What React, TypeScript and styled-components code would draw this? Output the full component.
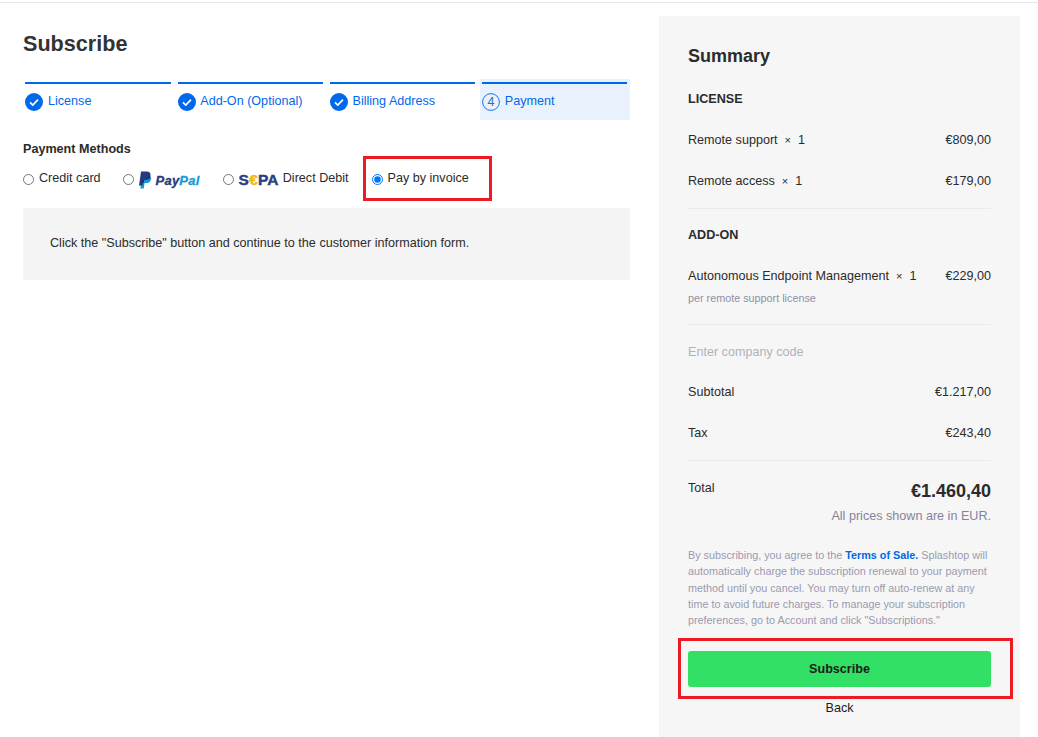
import React from 'react';
import styled, { createGlobalStyle } from 'styled-components';

const GlobalStyle = createGlobalStyle`
  html, body {
    margin: 0;
    padding: 0;
    background: #fff;
    overflow: hidden;
  }
  body {
    font-family: "Liberation Sans", Arial, sans-serif;
    font-size: 12.6px;
    color: #2b2b2b;
  }
`;

const BLUE = '#0068ea';

const TopRule = styled.div`
  height: 1px;
  margin-top: 2px;
  background: #e8e8e8;
`;

const Page = styled.div`
  display: flex;
  gap: 29px;
  padding: 13px 0 0 23px;
  height: 734px;
  box-sizing: border-box;
`;

const Main = styled.main`
  width: 607px;
  flex: none;
`;

const Title = styled.h1`
  margin: 0;
  padding-top: 15px;
  font-size: 21.6px;
  line-height: 25px;
  font-weight: 700;
  color: #333;
`;

const Steps = styled.ol`
  list-style: none;
  margin: 23px 0 0;
  padding: 0;
  display: grid;
  grid-template-columns: repeat(4, 1fr);
  gap: 2px;
`;

const Step = styled.li<{ $active?: boolean }>`
  height: 41px;
  box-sizing: border-box;
  padding: 3px 2.6px 0 2.4px;
  background: ${p => (p.$active ? '#e9f2fc' : 'transparent')};
`;

const StepInner = styled.div`
  height: 38px;
  box-sizing: border-box;
  border-top: 2px solid ${BLUE};
  display: flex;
  align-items: flex-start;
  gap: 4.6px;
  padding-top: 9px;
  color: ${BLUE};
  line-height: 14px;
`;

const StepLabel = styled.span`
  margin-top: 1px;
`;

const StepIcon = styled.svg`
  width: 18px;
  height: 18px;
  flex: none;
`;

const SectionLabel = styled.h2`
  margin: 22px 0 0;
  font-size: 12.6px;
  line-height: 15px;
  font-weight: 700;
  color: #2b2b2b;
`;

const Methods = styled.div`
  display: flex;
  align-items: center;
  gap: 22px;
  margin-top: 13px;
  height: 16px;
`;

const Method = styled.label<{ $shift?: number }>`
  position: relative;
  display: flex;
  align-items: center;
  line-height: 15px;
  white-space: nowrap;
  margin-left: ${p => p.$shift ?? 0}px;
`;

const Radio = styled.input.attrs({ type: 'radio', name: 'method', readOnly: true })`
  width: 11px;
  height: 11px;
  margin: 3px 5px 0 0;
  flex: none;
`;

const PayPalMark = styled.span`
  display: flex;
  align-items: center;
  gap: 4px;
  width: 62px;
`;

const PayPalWord = styled.span`
  font-size: 13px;
  line-height: 15px;
  margin-top: 4px;
  font-weight: 700;
  font-style: italic;
  color: #253b80;
  letter-spacing: 0.2px;
  -webkit-text-stroke: 0.3px #253b80;
  & > em {
    color: #179bd7;
    font-style: inherit;
    -webkit-text-stroke: 0.3px #179bd7;
  }
`;

const SepaMark = styled.span`
  font-size: 15.5px;
  line-height: 15px;
  margin: 3px 4px 0 0;
  font-weight: 700;
  color: #2a3d80;
  letter-spacing: 0.2px;
  -webkit-text-stroke: 0.4px #2a3d80;
  & > em {
    color: #f7b718;
    -webkit-text-stroke: 0.4px #f7b718;
    font-style: normal;
  }
`;

const Highlight = styled.span<{ $top: number; $right: number; $bottom: number; $left: number }>`
  position: absolute;
  top: ${p => p.$top}px;
  right: ${p => p.$right}px;
  bottom: ${p => p.$bottom}px;
  left: ${p => p.$left}px;
  border: 3px solid #ed1c24;
  pointer-events: none;
`;

const InfoBox = styled.div`
  margin-top: 22px;
  height: 72px;
  box-sizing: border-box;
  padding: 28px 27px 0;
  background: #f4f4f4;
  border-radius: 3px;
  line-height: 15px;
`;

const Panel = styled.aside`
  width: 361px;
  flex: none;
  box-sizing: border-box;
  padding: 0 29px;
  background: #f6f6f6;
`;

const PanelTitle = styled.h2`
  margin: 0;
  padding-top: 30px;
  font-size: 18px;
  line-height: 20px;
  font-weight: 700;
  color: #2b2b2b;
`;

const GroupLabel = styled.h3<{ $top: number }>`
  margin: ${p => p.$top}px 0 0;
  font-size: 12.6px;
  line-height: 15px;
  font-weight: 700;
  color: #2b2b2b;
`;

const Row = styled.div<{ $top: number }>`
  display: flex;
  justify-content: space-between;
  margin-top: ${p => p.$top}px;
  line-height: 15px;
`;

const Times = styled.span`
  margin: 0 7px 0 7px;
  font-size: 11px;
`;

const Note = styled.div`
  margin-top: 7px;
  font-size: 10.8px;
  line-height: 14px;
  color: #8f8fa6;
`;

const Divider = styled.hr<{ $top: number }>`
  border: 0;
  height: 1px;
  background: #ebebeb;
  margin: ${p => p.$top}px 0 0;
`;

const CompanyCode = styled.div`
  margin-top: 20px;
  line-height: 15px;
  color: #b1b1bd;
`;

const TotalRow = styled.div`
  display: flex;
  justify-content: space-between;
  align-items: flex-start;
  margin-top: 20px;
  line-height: 15px;
`;

const TotalPrice = styled.strong`
  font-size: 18px;
  line-height: 20px;
  color: #2b2b2b;
`;

const PriceNote = styled.div`
  margin-top: 8px;
  text-align: right;
  line-height: 15px;
  color: #8383a0;
`;

const Legal = styled.p`
  margin: 23px 0 0;
  font-size: 10.8px;
  line-height: 16.3px;
  color: #9a9aae;
  white-space: nowrap;
  & > a {
    color: ${BLUE};
    font-weight: 700;
    text-decoration: none;
  }
`;

const SubscribeWrap = styled.div`
  position: relative;
  margin-top: 23px;
`;

const SubscribeButton = styled.button`
  display: block;
  width: 100%;
  height: 36px;
  border: 0;
  border-radius: 3px;
  background: #33e066;
  font-family: inherit;
  font-size: 12.6px;
  font-weight: 700;
  color: #1b1b1b;
`;

const Back = styled.div`
  margin-top: 14px;
  text-align: center;
  line-height: 15px;
  color: #1b1b1b;
`;

const CheckIcon = () => (
  <StepIcon viewBox="0 0 18 18">
    <circle cx="9" cy="9" r="9" fill={BLUE} />
    <path d="M5 9.4l2.8 2.6L13 6.6" fill="none" stroke="#fff" strokeWidth="1.7" />
  </StepIcon>
);

const NumberIcon = ({ n }: { n: number }) => (
  <StepIcon viewBox="0 0 18 18">
    <circle cx="9" cy="9" r="8.4" fill="none" stroke={BLUE} strokeWidth="0.9" />
    <text x="9" y="13.4" textAnchor="middle" fontSize="12.6" fill="#3a6ea8" fontFamily="Liberation Sans">
      {n}
    </text>
  </StepIcon>
);

const PayPalIcon = () => (
  <svg width="13" height="18" viewBox="0 0 13 18" style={{ flex: 'none', marginTop: 3 }}>
    <path d="M3 4h5.2c2.6 0 4.4 1.4 4 3.9-.4 2.7-2.3 4.2-4.9 4.2H5.6L4.8 17.4H1.4z" fill="#179bd7" />
    <path d="M2 .6h5.6c2.8 0 4.3 1.5 3.9 4-.4 2.8-2.4 4.3-5 4.3H4.6l-1 5.6H0z" fill="#253b80" />
    <path d="M3.1 8.9h1.5c2.6 0 4.6-1.5 5-4.3l.1-.5c.9.5 1.4 1.2 1.5 2.3-.8 1.6-2.4 2.5-4.4 2.5H5.2l-.5 3H3.9z" fill="#222d65" />
  </svg>
);

const steps = ['License', 'Add-On (Optional)', 'Billing Address', 'Payment'];

const App: React.FC = () => {
  return (
    <>
      <GlobalStyle />
      <TopRule />
      <Page>
        <Main>
          <Title>Subscribe</Title>
          <Steps>
            {steps.map((label, i) => (
              <Step key={label} $active={i === 3}>
                <StepInner>
                  {i < 3 ? <CheckIcon /> : <NumberIcon n={i + 1} />}
                  <StepLabel>{label}</StepLabel>
                </StepInner>
              </Step>
            ))}
          </Steps>

          <SectionLabel>Payment Methods</SectionLabel>
          <Methods>
            <Method>
              <Radio />
              Credit card
            </Method>
            <Method>
              <Radio />
              <PayPalMark>
                <PayPalIcon />
                <PayPalWord>
                  Pay<em>Pal</em>
                </PayPalWord>
              </PayPalMark>
            </Method>
            <Method>
              <Radio />
              <SepaMark>
                S<em>€</em>PA
              </SepaMark>
              Direct Debit
            </Method>
            <Method $shift={1}>
              <Radio defaultChecked />
              Pay by invoice
              <Highlight $top={-15} $right={-23} $bottom={-15} $left={-9} />
            </Method>
          </Methods>

          <InfoBox>Click the "Subscribe" button and continue to the customer information form.</InfoBox>
        </Main>

        <Panel>
          <PanelTitle>Summary</PanelTitle>
          <GroupLabel $top={26}>LICENSE</GroupLabel>
          <Row $top={26}>
            <span>
              Remote support<Times>×</Times>1
            </span>
            <span>€809,00</span>
          </Row>
          <Row $top={26}>
            <span>
              Remote access<Times>×</Times>1
            </span>
            <span>€179,00</span>
          </Row>
          <Divider $top={19} />
          <GroupLabel $top={19}>ADD-ON</GroupLabel>
          <Row $top={26}>
            <span>
              Autonomous Endpoint Management<Times>×</Times>1
            </span>
            <span>€229,00</span>
          </Row>
          <Note>per remote support license</Note>
          <Divider $top={19} />
          <CompanyCode>Enter company code</CompanyCode>
          <Row $top={25}>
            <span>Subtotal</span>
            <span>€1.217,00</span>
          </Row>
          <Row $top={26}>
            <span>Tax</span>
            <span>€243,40</span>
          </Row>
          <Divider $top={19} />
          <TotalRow>
            <span>Total</span>
            <TotalPrice>€1.460,40</TotalPrice>
          </TotalRow>
          <PriceNote>All prices shown are in EUR.</PriceNote>
          <Legal>
            By subscribing, you agree to the <a href="#terms">Terms of Sale.</a> Splashtop will
            <br />
            automatically charge the subscription renewal to your payment
            <br />
            method until you cancel. You may turn off auto-renew at any
            <br />
            time to avoid future charges. To manage your subscription
            <br />
            preferences, go to Account and click "Subscriptions."
          </Legal>
          <SubscribeWrap>
            <SubscribeButton>Subscribe</SubscribeButton>
            <Highlight $top={-13} $right={-22} $bottom={-12} $left={-10} />
          </SubscribeWrap>
          <Back>Back</Back>
        </Panel>
      </Page>
    </>
  );
};

export default App;
